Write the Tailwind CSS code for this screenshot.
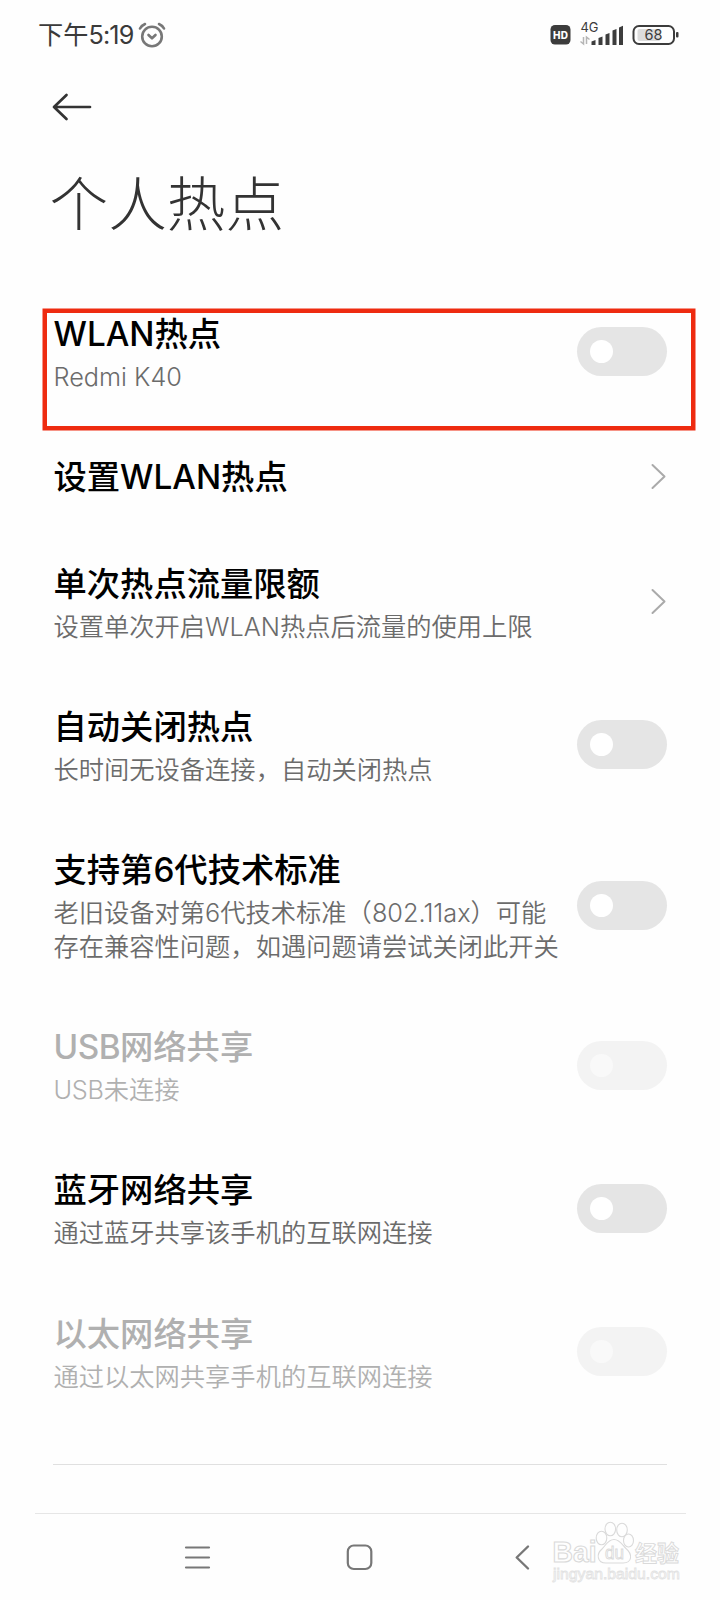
<!DOCTYPE html>
<html lang="zh-CN">
<head>
<meta charset="utf-8">
<title>个人热点</title>
<script src="https://cdn.jsdelivr.net/npm/@tailwindcss/browser@4"></script>
</head>
<body class="bg-[#fefefe]">
<div class="relative flex h-[1600px] w-[720px] flex-col overflow-hidden bg-[#fefefe] font-['Inter','Noto_Sans_CJK_SC',sans-serif]">

  <header class="flex h-[70px] shrink-0 items-center justify-between pr-[40px] pl-[38px] text-[#3a3a3a]">
    <div class="flex items-center">
      <span class="pt-[1px] text-[25.2px] leading-none whitespace-nowrap">下午<span class="tracking-[-0.8px]">5:19</span></span>
      <svg class="ml-[4px]" width="28" height="26" viewBox="0 0 28 26" fill="none" stroke="#777" stroke-width="2.6" stroke-linecap="round" stroke-linejoin="round"><circle cx="14" cy="14.500" r="9.800"/><path d="M10.500 13l3.500 3.300 3.500-3.300M2 6.500Q3.500 3.500 7 2M26 6.500Q24.500 3.500 21 2"/></svg>
    </div>
    <svg width="132" height="30" viewBox="0 0 132 30">
      <rect x="2.500" y="5" width="20" height="19.500" rx="4.500" fill="#3c3c3c"/>
      <text x="12.500" y="18.500" text-anchor="middle" font-size="10" font-weight="800" fill="#fff" textLength="15">HD</text>
      <text x="32.500" y="12" font-size="13" fill="#3c3c3c" textLength="18" lengthAdjust="spacingAndGlyphs">4G</text>
      <path d="M35.500 17v7l-3-2.500M38.500 24v-7l3 2.500" fill="none" stroke="#b5b5b5" stroke-width="1.500"/>
      <g fill="#3c3c3c"><path d="M43.500 25v-3.500l4-1.500v5zM50.500 25v-7l4-1.500V25zM57.500 25V14.500l4-1.500v12zM64.500 25V10.500L68.500 9v16zM71 25V7.500l4-1.800V25z"/></g>
      <rect x="85.500" y="6" width="40.500" height="18" rx="5.500" fill="none" stroke="#3c3c3c" stroke-width="2"/>
      <rect x="89.500" y="9" width="23" height="12" rx="2" fill="#dcdcdc"/>
      <rect x="128" y="12" width="2.500" height="5.500" rx="1" fill="#3c3c3c"/>
      <text x="105.500" y="20.300" text-anchor="middle" font-size="15" fill="#3c3c3c" textLength="18" lengthAdjust="spacingAndGlyphs">68</text>
    </svg>
  </header>

  <div class="flex h-[74px] shrink-0 items-center pl-[52px]">
    <svg width="40" height="28" viewBox="0 0 40 28" fill="none" stroke="#333" stroke-width="2.700" stroke-linecap="round" stroke-linejoin="round"><path d="M38 14H2M14.500 2L2 14l12.500 12"/></svg>
  </div>
  <h1 class="flex h-[135.500px] shrink-0 items-center pb-[14px] pl-[49.500px] text-[58.700px] leading-[88px] font-light text-[#333]">个人热点</h1>

  <main class="flex shrink-0 flex-col px-[53px] text-[25.280px] leading-[34px] font-[350] text-[#6b6b6b]">
    <section class="flex h-[143.200px] items-center justify-between">
      <div class="pl-[0.500px]"><h2 class="text-[33.300px] leading-[51px] font-medium text-black">WLAN热点</h2><p>Redmi K40</p></div>
      <div class="mr-[0.500px] flex h-[49px] w-[89.500px] items-center rounded-full bg-[#e5e5e5] pl-[13px]"><i class="size-[23px] rounded-full bg-white"></i></div>
    </section>
    <section class="flex h-[107.500px] items-center justify-between">
      <h2 class="pt-[2px] pl-[0.500px] text-[33.300px] leading-[51px] font-medium text-black">设置WLAN热点</h2>
      <svg width="17" height="27" viewBox="0 0 17 27" fill="none" stroke="#aaa" stroke-width="2" stroke-linecap="round" stroke-linejoin="round"><path d="M2.500 2l12 11.500-12 11.500"/></svg>
    </section>
    <section class="flex h-[143.200px] items-center justify-between">
      <div class="pb-[1px] pl-[0.500px]"><h2 class="text-[33.300px] leading-[51px] font-medium text-black">单次热点流量限额</h2><p>设置单次开启WLAN热点后流量的使用上限</p></div>
      <svg width="17" height="27" viewBox="0 0 17 27" fill="none" stroke="#aaa" stroke-width="2" stroke-linecap="round" stroke-linejoin="round"><path d="M2.500 2l12 11.500-12 11.500"/></svg>
    </section>
    <section class="flex h-[143.200px] items-center justify-between">
      <div class="pb-[1px] pl-[0.500px]"><h2 class="text-[33.300px] leading-[51px] font-medium text-black">自动关闭热点</h2><p>长时间无设备连接，自动关闭热点</p></div>
      <div class="mr-[0.500px] flex h-[49px] w-[89.500px] items-center rounded-full bg-[#e5e5e5] pl-[13px]"><i class="size-[23px] rounded-full bg-white"></i></div>
    </section>
    <section class="flex h-[177px] items-center justify-between">
      <div class="pb-[1px] pl-[0.500px] whitespace-nowrap"><h2 class="text-[33.300px] leading-[51px] font-medium text-black">支持第6代技术标准</h2><p>老旧设备对第6代技术标准（802.11ax）可能<br>存在兼容性问题，如遇问题请尝试关闭此开关</p></div>
      <div class="mr-[0.500px] flex h-[49px] w-[89.500px] shrink-0 items-center rounded-full bg-[#e5e5e5] pl-[13px]"><i class="size-[23px] rounded-full bg-white"></i></div>
    </section>
    <section class="flex h-[143.200px] items-center justify-between text-[#b0b0b0]">
      <div class="pb-[1px] pl-[0.500px]"><h2 class="text-[33.300px] leading-[51px] font-medium text-[#b0b0b0]"><span class="tracking-[-0.500px]">USB</span>网络共享</h2><p><span class="tracking-[-0.250px]">USB</span>未连接</p></div>
      <div class="mr-[0.500px] flex h-[49px] w-[89.500px] items-center rounded-full bg-[#f3f3f3] pl-[13px]"><i class="size-[23px] rounded-full bg-[#f9f9f9]"></i></div>
    </section>
    <section class="flex h-[143.200px] items-center justify-between">
      <div class="pb-[1px] pl-[0.500px]"><h2 class="text-[33.300px] leading-[51px] font-medium text-black">蓝牙网络共享</h2><p>通过蓝牙共享该手机的互联网连接</p></div>
      <div class="mr-[0.500px] flex h-[49px] w-[89.500px] items-center rounded-full bg-[#e5e5e5] pl-[13px]"><i class="size-[23px] rounded-full bg-white"></i></div>
    </section>
    <section class="flex h-[143.200px] items-center justify-between text-[#b0b0b0]">
      <div class="pb-[1px] pl-[0.500px]"><h2 class="text-[33.300px] leading-[51px] font-medium text-[#b0b0b0]">以太网络共享</h2><p>通过以太网共享手机的互联网连接</p></div>
      <div class="mr-[0.500px] flex h-[49px] w-[89.500px] items-center rounded-full bg-[#f3f3f3] pl-[13px]"><i class="size-[23px] rounded-full bg-[#f9f9f9]"></i></div>
    </section>
    <hr class="mt-[40.500px] border-t border-[#e0e0e0]">
  </main>

  <nav class="mt-auto mr-[34px] ml-[35px] flex h-[87px] shrink-0 border-t border-[#e6e6e6] pt-[28.500px] pl-[148.500px]">
    <svg width="27" height="29" viewBox="0 0 27 29" stroke="#777" stroke-width="2.200" stroke-linecap="round"><path d="M2 4.500h23M2 14.500h23M2 24.500h23"/></svg>
    <svg class="ml-[135.500px]" width="27" height="29" viewBox="0 0 27 29" fill="none" stroke="#777" stroke-width="2.200"><rect x="1.800" y="2.500" width="23.500" height="23.500" rx="6"/></svg>
    <svg class="ml-[141.500px]" width="16" height="29" viewBox="0 0 16 29" fill="none" stroke="#777" stroke-width="2.400" stroke-linecap="round" stroke-linejoin="round"><path d="M13 3.500L1.700 14.500 13 25.500"/></svg>
  </nav>

  <div class="absolute top-[309px] left-[43px] h-[121px] w-[652px] border-[4.500px] border-[#ee2b10] [box-shadow:0_0_0_0.5px_#ee2b10]"></div>

  <svg class="absolute top-[1518px] left-[548px]" width="140" height="68" viewBox="0 0 140 68" fill="#fefefe" stroke="#dadada" stroke-width="1.100" font-family="Liberation Sans, Noto Sans CJK SC, sans-serif">
    <text x="4.500" y="44" font-size="29" font-weight="700" textLength="44" lengthAdjust="spacingAndGlyphs">Bai</text>
    <ellipse cx="53.500" cy="20" rx="5.300" ry="6.800"/><ellipse cx="62.300" cy="11" rx="5.300" ry="6.800"/><ellipse cx="74" cy="12" rx="5.300" ry="6.800"/><ellipse cx="80.500" cy="22.500" rx="5" ry="6.500"/>
    <path d="M66 21.500c6 0 8 5 12 9 7 6 6 14.500-3 14.500H58c-9 0-10-9-4-14 4-4 6-9.500 12-9.500z"/>
    <text x="57" y="41" font-size="18" stroke-width="0.900" textLength="19" lengthAdjust="spacingAndGlyphs">du</text>
    <text x="87" y="43" font-size="22" font-weight="700" stroke-width="0.900">经验</text>
    <text x="5" y="61" font-size="15" stroke="#e2e2e2" stroke-width="0.800" textLength="127" lengthAdjust="spacingAndGlyphs">jingyan.baidu.com</text>
  </svg>
</div>
</body>
</html>
